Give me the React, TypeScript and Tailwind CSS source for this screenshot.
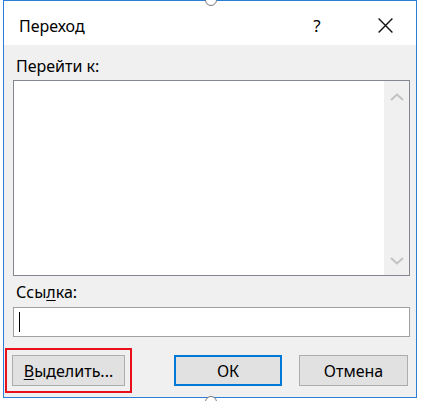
import React from 'react';

const font = { fontFamily: '"Noto Sans", "Open Sans", sans-serif' };

const Chevron: React.FC<{ up?: boolean }> = ({ up }) => (
  <svg width="14" height="8" viewBox="0 0 14 8" className="text-[#c2c2c2]">
    <path d={up ? 'M1 7 L7 1.5 L13 7' : 'M1 1 L7 6.5 L13 1'} fill="none" stroke="currentColor" strokeWidth="2" />
  </svg>
);

const App: React.FC = () => {
  return (
    <div className="w-[421px] h-[401px] bg-white relative overflow-hidden" style={font}>
      {/* dialog window */}
      <div className="absolute left-[3px] top-0 w-[414px] h-[398px] border border-[#2b7fd9] bg-[#f0f0f0] flex flex-col">
        {/* title bar */}
        <div className="h-[44px] bg-white flex items-center pl-[15px] pr-[22px] text-[#000]">
          <span className="text-[16px] flex-1 pt-[5px]">Переход</span>
          <span className="text-[17px] w-[20px] text-center mr-[50px] pt-[5px]">?</span>
          <svg width="17" height="17" viewBox="0 0 16 16" className="mt-[5px]">
            <path d="M1.5 1.5 L14.5 14.5 M14.5 1.5 L1.5 14.5" stroke="#111" strokeWidth="1.3" fill="none" />
          </svg>
        </div>

        <div className="flex-1 flex flex-col pl-[9px] pr-[6px] pt-[12px]">
          <div className="pl-[3px] text-[16px] leading-[18px] text-black">Перейти к:</div>
          <div className="mt-[5px] h-[196px] border border-[#828790] bg-white flex">
            <div className="flex-1" />
            <div className="w-[25px] bg-[#f0f0f0] flex flex-col items-center justify-between pt-[12px] pb-[10px]">
              <Chevron up />
              <Chevron />
            </div>
          </div>

          <div className="mt-[7px] pl-[3px] text-[16px] leading-[18px] text-black">
            Сс<span>ы</span><span className="underline underline-offset-2">л</span>ка:
          </div>
          <div className="mt-[6px] h-[30px] border border-[#a0a0a0] bg-white flex items-center pl-[5px]">
            <div className="w-[1px] h-[20px] bg-black" />
          </div>

          <div className="mt-[10px] flex items-start">
            <div className="border-2 border-[#e8101a] p-[5px] -ml-[8px] mt-[1px]">
              <button className="w-[113px] h-[31px] bg-[#e1e1e1] border border-[#adadad] text-[16px] text-black">
                <span className="underline underline-offset-2">В</span>ыделить...
              </button>
            </div>
            <button className="ml-[42px] mt-[8px] w-[108px] h-[31px] bg-[#e1e1e1] border-2 border-[#0078d7] text-[16px] text-black">
              ОК
            </button>
            <button className="ml-[17px] mt-[8px] w-[109px] h-[31px] bg-[#e1e1e1] border border-[#adadad] text-[16px] text-black">
              Отмена
            </button>
          </div>
        </div>
      </div>
      {/* resize handles */}
      <div className="absolute left-[205px] -top-[6px] w-[12px] h-[12px] rounded-full bg-white border border-[#7a7a7a]" />
      <div className="absolute left-[205px] top-[396px] w-[12px] h-[12px] rounded-full bg-white border border-[#7a7a7a]" />
    </div>
  );
};

export default App;
